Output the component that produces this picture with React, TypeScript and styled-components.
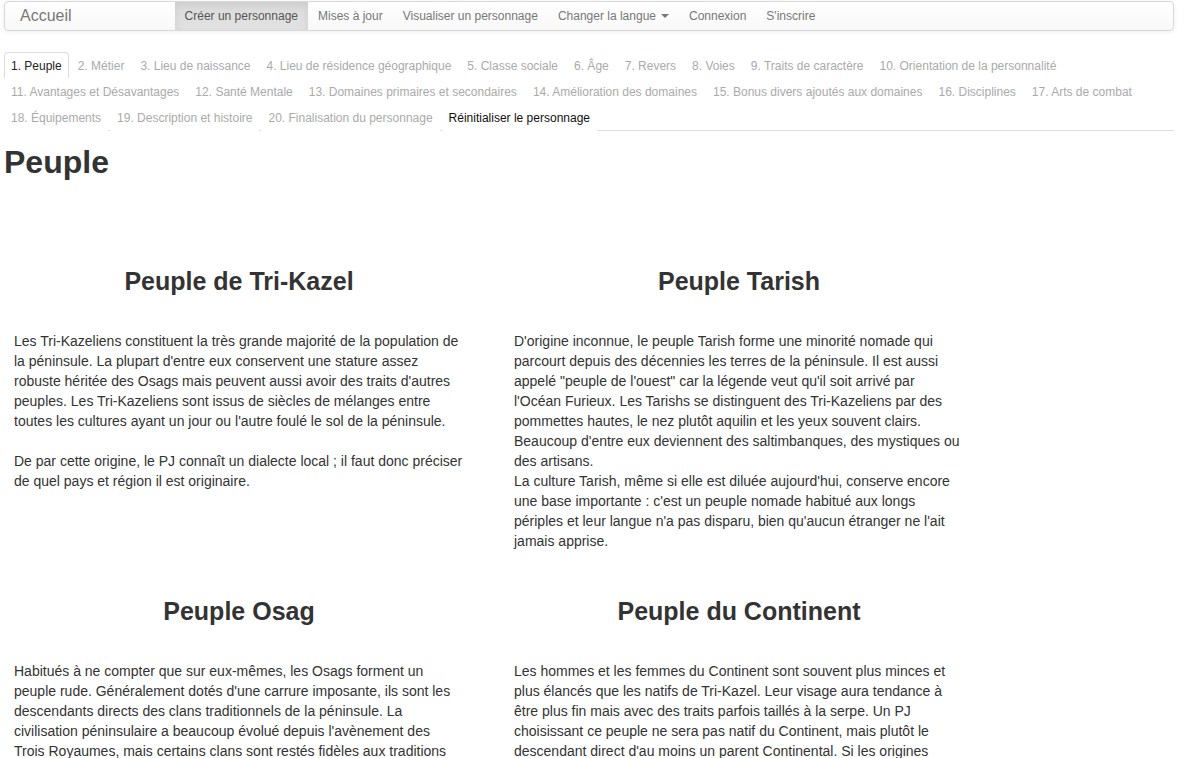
import React from "react";
import styled, { createGlobalStyle } from "styled-components";

const Global = createGlobalStyle`
  html, body { margin: 0; padding: 0; background: #fff; }
  body {
    font-family: "Liberation Sans", Arial, Helvetica, sans-serif;
    font-size: 14px;
    line-height: 20px;
    color: #333;
  }
  * { box-sizing: border-box; }
`;

const Page = styled.div`
  width: 1174px;
  padding: 1px 0 0 4px;
`;

const Navbar = styled.nav`
  display: flex;
  align-items: stretch;
  height: 30px;
  border: 1px solid #d9d9d9;
  border-radius: 4px;
  background: linear-gradient(to bottom, #ffffff 0%, #f8f8f8 100%);
  box-shadow: inset 0 1px 0 rgba(255, 255, 255, 0.15), 0 1px 5px rgba(0, 0, 0, 0.075);
  margin-bottom: 21px;
  overflow: hidden;
`;

const Brand = styled.a`
  display: flex;
  align-items: center;
  padding: 0 15px;
  font-size: 16px;
  color: #777;
  text-decoration: none;
`;

const NavList = styled.ul`
  display: flex;
  list-style: none;
  margin: 0 0 0 88px;
  padding: 0;
`;

const NavLink = styled.a<{ $active?: boolean }>`
  display: flex;
  align-items: center;
  height: 100%;
  padding: 0 10px;
  font-size: 12px;
  color: ${(p) => (p.$active ? "#555" : "#777")};
  text-decoration: none;
  background: ${(p) =>
    p.$active ? "linear-gradient(to bottom, #dbdbdb 0%, #e2e2e2 100%)" : "transparent"};
  box-shadow: ${(p) => (p.$active ? "inset 0 3px 9px rgba(0, 0, 0, 0.075)" : "none")};
`;

const Caret = styled.span`
  display: inline-block;
  width: 0;
  height: 0;
  margin-left: 5px;
  border-top: 4px solid #777;
  border-left: 4px solid transparent;
  border-right: 4px solid transparent;
`;

const Tabs = styled.ul`
  display: flex;
  flex-wrap: wrap;
  list-style: none;
  margin: 0;
  padding: 0;
  border-bottom: 1px solid #ddd;
`;

const TabItem = styled.li`
  margin-bottom: -1px;
`;

const TabLink = styled.a<{ $state: "active" | "disabled" | "normal" }>`
  display: block;
  margin-right: 2px;
  padding: 5px 6px 3px;
  font-size: 12px;
  line-height: 17px;
  text-decoration: none;
  border: 1px solid ${(p) => (p.$state === "active" ? "#ddd" : "transparent")};
  border-bottom-color: ${(p) => (p.$state === "active" ? "#fff" : "transparent")};
  border-radius: 4px 4px 0 0;
  background: #fff;
  color: ${(p) => (p.$state === "active" ? "#222" : p.$state === "disabled" ? "#aaa" : "#111")};
`;

const Title = styled.h1`
  margin: 14px 0 0;
  font-size: 32px;
  line-height: 35px;
  font-weight: bold;
  color: #333;
`;

const Grid = styled.div`
  display: grid;
  grid-template-columns: 450px 450px;
  column-gap: 50px;
  row-gap: 46px;
  margin: 87px 0 0 10px;
`;

const Block = styled.section``;

const BlockTitle = styled.h3`
  margin: 0 0 36px;
  font-size: 25px;
  line-height: 28px;
  font-weight: bold;
  text-align: center;
  color: #333;
`;

const Text = styled.p`
  margin: 0;
`;

const tabs = [
  "1. Peuple",
  "2. Métier",
  "3. Lieu de naissance",
  "4. Lieu de résidence géographique",
  "5. Classe sociale",
  "6. Âge",
  "7. Revers",
  "8. Voies",
  "9. Traits de caractère",
  "10. Orientation de la personnalité",
  "11. Avantages et Désavantages",
  "12. Santé Mentale",
  "13. Domaines primaires et secondaires",
  "14. Amélioration des domaines",
  "15. Bonus divers ajoutés aux domaines",
  "16. Disciplines",
  "17. Arts de combat",
  "18. Équipements",
  "19. Description et histoire",
  "20. Finalisation du personnage",
];

export default function App() {
  return (
    <>
      <Global />
      <Page>
        <Navbar>
          <Brand href="#">Accueil</Brand>
          <NavList>
            <li><NavLink $active href="#">Créer un personnage</NavLink></li>
            <li><NavLink href="#">Mises à jour</NavLink></li>
            <li><NavLink href="#">Visualiser un personnage</NavLink></li>
            <li><NavLink href="#">Changer la langue<Caret /></NavLink></li>
            <li><NavLink href="#">Connexion</NavLink></li>
            <li><NavLink href="#">S'inscrire</NavLink></li>
          </NavList>
        </Navbar>

        <Tabs>
          {tabs.map((t, i) => (
            <TabItem key={t}>
              <TabLink href="#" $state={i === 0 ? "active" : "disabled"}>{t}</TabLink>
            </TabItem>
          ))}
          <TabItem>
            <TabLink href="#" $state="normal">Réinitialiser le personnage</TabLink>
          </TabItem>
        </Tabs>

        <Title>Peuple</Title>

        <Grid>
          <Block>
            <BlockTitle>Peuple de Tri-Kazel</BlockTitle>
            <Text>
              Les Tri-Kazeliens constituent la très grande majorité de la population de la péninsule. La plupart d'entre eux conservent une stature assez robuste héritée des Osags mais peuvent aussi avoir des traits d'autres peuples. Les Tri-Kazeliens sont issus de siècles de mélanges entre toutes les cultures ayant un jour ou l'autre foulé le sol de la péninsule.
              <br />
              <br />
              De par cette origine, le PJ connaît un dialecte local ; il faut donc préciser de quel pays et région il est originaire.
            </Text>
          </Block>
          <Block>
            <BlockTitle>Peuple Tarish</BlockTitle>
            <Text>
              D'origine inconnue, le peuple Tarish forme une minorité nomade qui parcourt depuis des décennies les terres de la péninsule. Il est aussi appelé "peuple de l'ouest" car la légende veut qu'il soit arrivé par l'Océan Furieux. Les Tarishs se distinguent des Tri-Kazeliens par des pommettes hautes, le nez plutôt aquilin et les yeux souvent clairs. Beaucoup d'entre eux deviennent des saltimbanques, des mystiques ou des artisans.
              <br />
              La culture Tarish, même si elle est diluée aujourd'hui, conserve encore une base importante : c'est un peuple nomade habitué aux longs périples et leur langue n'a pas disparu, bien qu'aucun étranger ne l'ait jamais apprise.
            </Text>
          </Block>
          <Block>
            <BlockTitle>Peuple Osag</BlockTitle>
            <Text>
              Habitués à ne compter que sur eux-mêmes, les Osags forment un peuple rude. Généralement dotés d'une carrure imposante, ils sont les descendants directs des clans traditionnels de la péninsule. La civilisation péninsulaire a beaucoup évolué depuis l'avènement des Trois Royaumes, mais certains clans sont restés fidèles aux traditions ancestrales et vivent encore à l'écart des cités.
            </Text>
          </Block>
          <Block>
            <BlockTitle>Peuple du Continent</BlockTitle>
            <Text>
              Les hommes et les femmes du Continent sont souvent plus minces et plus élancés que les natifs de Tri-Kazel. Leur visage aura tendance à être plus fin mais avec des traits parfois taillés à la serpe. Un PJ choisissant ce peuple ne sera pas natif du Continent, mais plutôt le descendant direct d'au moins un parent Continental. Si les origines continentales de sa famille sont lointaines, il en garde néanmoins quelques traces.
            </Text>
          </Block>
        </Grid>
      </Page>
    </>
  );
}
